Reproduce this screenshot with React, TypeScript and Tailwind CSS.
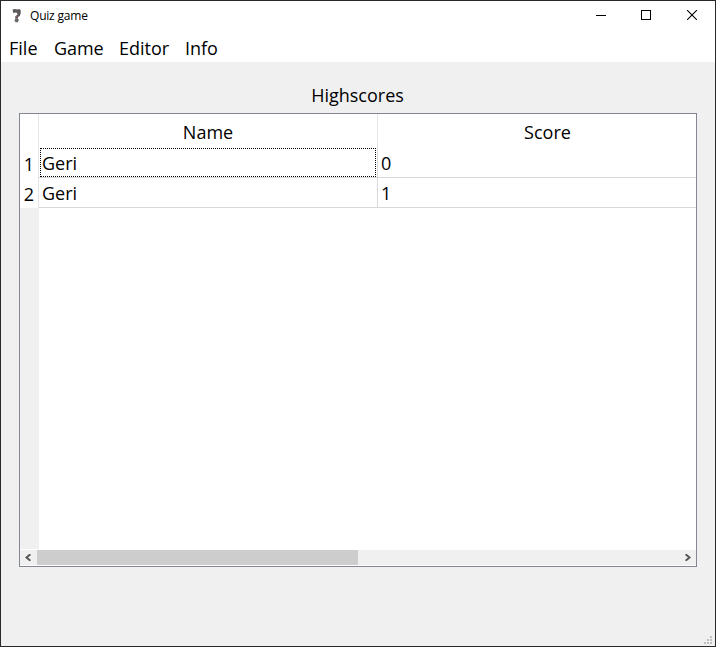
import React from 'react';

const menus = [
  { label: 'File', box: 'w-[45px]' },
  { label: 'Game', box: 'w-[65px] tracking-[-0.1px]' },
  { label: 'Editor', box: 'w-[66px]' },
  { label: 'Info', box: 'w-[50px]' },
];

const scores = [
  { name: 'Geri', score: 0 },
  { name: 'Geri', score: 1 },
];

function TitleBar() {
  return (
    <header className="flex h-[33px] shrink-0 items-start bg-white">
      <svg className="ml-[9px] mt-[7px] h-4 w-4" viewBox="0 0 16 16">
        <path d="M2.6 1.6L5 1l2 .6L9.400 1l1.300 1.200v3.300L9.800 8 8 9v1.500H5.200V8.500L7.500 6.500V5L5.500 4.600 3.200 5z" fill="#5a5a5a" />
        <path d="M5.300 10.500L8 10.200l.8 1.800-1 2.300H5.600L4.600 12.600z" fill="#666" />
        <path d="M7 5h1v1H7zM6 8h1v1H6z" fill="#a05560" />
      </svg>
      <span className="ml-[4px] mt-[6px] text-[12px] leading-[18px] tracking-[-0.2px]">Quiz game</span>
      <div className="ml-auto mr-[18px] mt-[9px] flex gap-[35px]">
        <svg className="h-[10px] w-[10px]" viewBox="0 0 10 10" shapeRendering="crispEdges">
          <path d="M0 5h10v1H0z" />
        </svg>
        <svg className="h-[10px] w-[10px]" viewBox="0 0 10 10" shapeRendering="crispEdges">
          <path d="M.5.5h9v9h-9z" fill="none" stroke="#000" />
        </svg>
        <svg className="ml-[1px] h-[10px] w-[10px]" viewBox="0 0 10 10">
          <path d="M0 0l10 10M10 0L0 10" stroke="#000" strokeWidth="1.1" />
        </svg>
      </div>
    </header>
  );
}

function Arrow({ flip = false }: { flip?: boolean }) {
  return (
    <div className={flip ? 'flex h-[15px] w-[17px] shrink-0 items-center justify-center' : 'flex h-[15px] w-[17px] shrink-0 items-center pl-[5px]'}>
      <svg className={flip ? 'h-[7px] w-[6px] rotate-180' : 'h-[7px] w-[6px]'} viewBox="0 0 6 7">
        <path d="M5.400.3L1.500 3.500l3.900 3.200" fill="none" stroke="#555" strokeWidth="2" />
      </svg>
    </div>
  );
}

function ScoreTable() {
  return (
    <section className="mx-[18px] flex h-[454px] shrink-0 flex-col border border-[#828790] bg-white">
      <div className="flex h-[34px] shrink-0 text-center leading-[37px]">
        <div className="w-[19px] border-r border-[#e5e5e5]" />
        <div className="w-[339px] border-r border-[#e5e5e5]">Name</div>
        <div className="flex-1 pl-[21px]">Score</div>
      </div>
      {scores.map((row, i) => (
        <div key={i} className="flex h-[30px] shrink-0 leading-[31px]">
          <div className="w-[19px] border-r border-[#e5e5e5] pt-px text-center">{i + 1}</div>
          <div className="flex w-[339px] border-b border-r border-[#d8d8d8]">
            {i === 0 ? (
              <div className="ml-px mr-px h-[29px] flex-1 border border-dotted border-black pl-px leading-[29px]">{row.name}</div>
            ) : (
              <div className="pl-[3px]">{row.name}</div>
            )}
          </div>
          <div className="flex-1 border-b border-[#d8d8d8] pl-[3px]">{row.score}</div>
        </div>
      ))}
      <div className="mb-px flex-1">
        <div className="h-full w-[19px] bg-[#f0f0f0]" />
      </div>
      <div className="mb-px flex h-[15px] shrink-0 bg-[#f0f0f0]">
        <Arrow />
        <div className="w-[321px] bg-[#cdcdcd]" />
        <div className="flex-1" />
        <Arrow flip />
      </div>
    </section>
  );
}

export default function App() {
  return (
    <div className="flex h-[647px] w-[716px] flex-col overflow-hidden border border-[#29282b] bg-[#f0f0f0] font-['Open_Sans','Noto_Sans',sans-serif] text-[18px] text-black">
      <TitleBar />
      <nav className="flex h-[28px] shrink-0 bg-white pl-[8px] leading-[28px]">
        {menus.map((m) => (
          <span key={m.label} className={m.box}>{m.label}</span>
        ))}
      </nav>
      <h1 className="h-[51px] shrink-0 pr-px pt-[19px] text-center leading-[28px]">Highscores</h1>
      <ScoreTable />
      <footer className="mt-auto flex justify-end pb-[2px] pr-[3px]">
        <svg className="h-[8px] w-[8px]" viewBox="0 0 8 8" fill="#bfbfbf" shapeRendering="crispEdges">
          <path d="M6 0h2v2H6zM3 3h2v2H3zM6 3h2v2H6zM0 6h2v2H0zM3 6h2v2H3zM6 6h2v2H6z" />
        </svg>
      </footer>
    </div>
  );
}
